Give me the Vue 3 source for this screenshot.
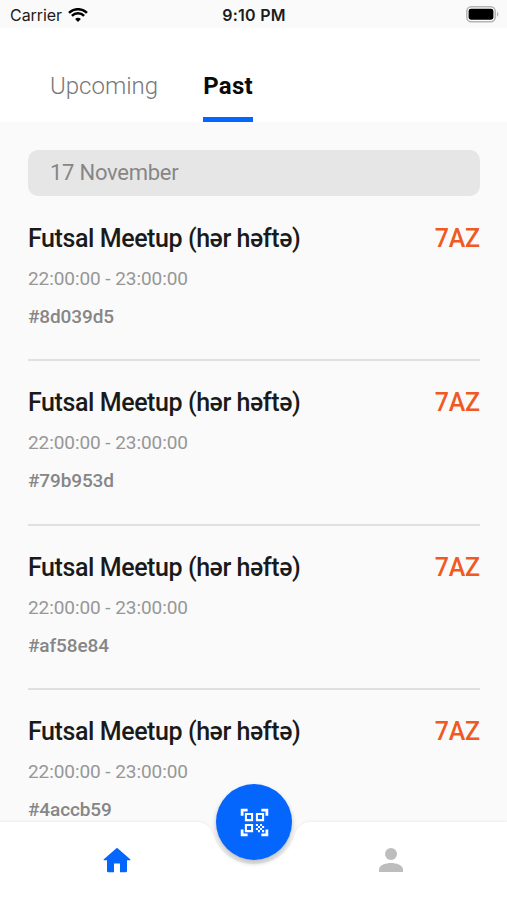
<template>
  <div class="screen">
    <header class="status-bar">
      <div class="carrier">
        <span>Carrier</span>
        <svg class="wifi" viewBox="0 0 20 14">
          <path d="M10 14l-2.900-2.900a4.100 4.100 0 0 1 5.800 0z" />
          <path d="M3.900 7.900a8.600 8.600 0 0 1 12.200 0" />
          <path d="M1 4.900a12.800 12.800 0 0 1 18 0" />
        </svg>
      </div>
      <span class="clock">9:10 PM</span>
      <div class="battery-wrap">
        <svg class="battery" viewBox="0 0 33 17">
          <rect x="0.8" y="0.8" width="28.4" height="14.9" rx="4.4" />
          <rect class="level" x="2.6" y="2.7" width="24.8" height="11" rx="2.4" />
          <path class="tip" d="M31 5.800c1.800.8 1.800 4.200 0 5z" />
        </svg>
      </div>
    </header>

    <nav class="tabs">
      <button
        v-for="tab in tabs"
        :key="tab"
        :class="['tab', { active: tab === activeTab }]"
        @click="activeTab = tab"
      >{{ tab }}</button>
    </nav>

    <main class="content">
      <div class="date">17 November</div>
      <div v-for="item in meetups" :key="item.id" class="meetup">
        <div class="meetup-header">
          <h3>{{ item.title }}</h3>
          <span class="price">{{ item.price }}</span>
        </div>
        <p class="time">{{ item.time }}</p>
        <p class="code">#{{ item.id }}</p>
      </div>
    </main>

    <footer class="bottom-bar">
      <svg class="bar-shape" viewBox="0 0 507 78">
        <path d="M0 0H195C207 0 211 6 214 15C220 31 235 42 254 42S288 31 294 15C297 6 301 0 313 0H507V78H0z" />
      </svg>
      <button class="nav-item">
        <svg class="home" viewBox="0 0 28 26">
          <path d="M14 .7L27.200 12.200c.5.5.2 1-.4 1H24V24c0 .7-.4 1.200-1.200 1.200H17v-8.700h-6v8.700H5.200c-.8 0-1.200-.5-1.200-1.200V13.200H1.200c-.6 0-.9-.5-.4-1z" />
        </svg>
      </button>
      <button class="nav-item">
        <svg class="person" viewBox="0 0 24 24">
          <circle cx="12" cy="6" r="6" />
          <path d="M12 15c-5 0-12 2-12 6.500V24h24v-2.500C24 17 17 15 12 15z" />
        </svg>
      </button>
      <button class="scan">
        <svg viewBox="0 0 24 24">
          <path d="M9.500 6.500v3h-3v-3h3M11 5H5v6h6V5zm-1.500 9.500v3h-3v-3h3M11 13H5v6h6v-6zm6.500-6.500v3h-3v-3h3M19 5h-6v6h6V5zm-6 8h1.500v1.500H13V13zm1.500 1.500H16V16h-1.500v-1.500zM16 13h1.500v1.500H16V13zm-3 3h1.500v1.500H13V16zm1.500 1.500H16V19h-1.500v-1.500zM16 16h1.500v1.500H16V16zm1.500-1.500H19V16h-1.500v-1.500zm0 3H19V19h-1.500v-1.500zM22 7h-2V4h-3V2h5v5zm0 15v-5h-2v3h-3v2h5zM2 22h5v-2H4v-3H2v5zM2 2v5h2V4h3V2H2z" />
        </svg>
      </button>
    </footer>
  </div>
</template>

<script setup>
import { ref } from 'vue'

const tabs = ['Upcoming', 'Past']
const activeTab = ref('Past')

const meetups = ref([
  { id: '8d039d5', title: 'Futsal Meetup (hər həftə)', time: '22:00:00 - 23:00:00', price: '7AZ' },
  { id: '79b953d', title: 'Futsal Meetup (hər həftə)', time: '22:00:00 - 23:00:00', price: '7AZ' },
  { id: 'af58e84', title: 'Futsal Meetup (hər həftə)', time: '22:00:00 - 23:00:00', price: '7AZ' },
  { id: '4accb59', title: 'Futsal Meetup (hər həftə)', time: '22:00:00 - 23:00:00', price: '7AZ' },
])
</script>

<style>
body {
  margin: 0;
  background: #fafafa;
}
</style>

<style scoped>
.screen {
  display: flex;
  flex-direction: column;
  height: 900px;
  overflow: hidden;
  background: #fafafa;
  font-family: Roboto, sans-serif;
}

button {
  padding: 0;
  border: none;
  background: none;
  font-family: inherit;
  cursor: pointer;
}

.status-bar {
  display: grid;
  grid-template-columns: 1fr auto 1fr;
  align-items: center;
  flex: none;
  height: 28px;
  box-sizing: border-box;
  padding: 1px 8px 0 10px;
  font-family: Inter, sans-serif;
  font-size: 16px;
  color: #1c1c1c;
}

.carrier {
  display: flex;
  align-items: center;
  gap: 6px;
  letter-spacing: -0.05px;
}

.wifi {
  width: 20px;
  height: 14px;
  fill: none;
  stroke: #000;
  stroke-width: 2.5;
}

.wifi path:first-child {
  fill: #000;
  stroke: none;
}

.clock {
  margin-right: 1px;
  font-weight: 600;
  letter-spacing: 0.25px;
}

.battery-wrap {
  display: flex;
  justify-content: flex-end;
}

.battery {
  width: 33px;
  height: 17px;
  fill: none;
  stroke: #b5b5b5;
  stroke-width: 1.5;
}

.battery .level {
  fill: #000;
  stroke: none;
}

.battery .tip {
  fill: #b5b5b5;
  stroke: none;
}

.tabs {
  display: flex;
  align-items: flex-end;
  gap: 45px;
  flex: none;
  height: 94px;
  padding-left: 50px;
  background: #fff;
}

.tab {
  height: 55px;
  padding-bottom: 12px;
  border-bottom: 5px solid transparent;
  font-size: 24px;
  font-weight: 300;
  color: #777;
}

.tab.active {
  border-color: #0466fd;
  font-weight: 700;
  letter-spacing: 0.3px;
  color: #0a0a0a;
}

.content {
  flex: 1;
  min-height: 0;
  overflow: hidden;
  padding: 28px 27px 0 28px;
}

.date {
  height: 46px;
  margin-bottom: 1px;
  padding-left: 22px;
  border-radius: 10px;
  background: #e6e6e6;
  font-size: 22px;
  letter-spacing: -0.25px;
  line-height: 46px;
  color: #868686;
}

.meetup {
  height: 164.4px;
  box-sizing: border-box;
  padding-top: 26px;
  border-bottom: 2px solid #e0e0e0;
}

.meetup-header {
  display: flex;
  justify-content: space-between;
  font-size: 25px;
  line-height: 32px;
}

.meetup h3 {
  margin: 0;
  font-size: inherit;
  font-weight: 500;
  letter-spacing: -0.42px;
  color: #1a1a1a;
}

.price {
  font-weight: 500;
  letter-spacing: -0.2px;
  color: #f0591f;
}

.time,
.code {
  margin: 0;
  font-size: 19px;
  letter-spacing: -0.07px;
  line-height: 24px;
}

.time {
  margin-top: 12px;
  color: #979797;
}

.code {
  margin-top: 14px;
  font-weight: 500;
  letter-spacing: -0.12px;
  color: #868686;
}

.bottom-bar {
  position: relative;
  display: grid;
  grid-template-columns: 274px 274px;
  justify-content: center;
  flex: none;
  height: 78px;
}

.bar-shape {
  position: absolute;
  inset: 0;
  width: 100%;
  height: 100%;
  fill: #fff;
  filter: drop-shadow(0 -1px 1px rgba(0, 0, 0, 0.05));
}

.nav-item {
  position: relative;
  padding-top: 1px;
}

.home {
  width: 28px;
  height: 26px;
  fill: #0466fd;
}

.person {
  width: 24px;
  height: 24px;
  fill: #bdbdbd;
}

.scan {
  position: absolute;
  top: -38px;
  left: 216px;
  display: flex;
  align-items: center;
  justify-content: center;
  width: 76px;
  height: 76px;
  border-radius: 50%;
  background: #0466fd;
  box-shadow: 0 3px 5px rgba(0, 0, 0, 0.25);
}

.scan svg {
  width: 33px;
  height: 33px;
  fill: #fff;
}
</style>
